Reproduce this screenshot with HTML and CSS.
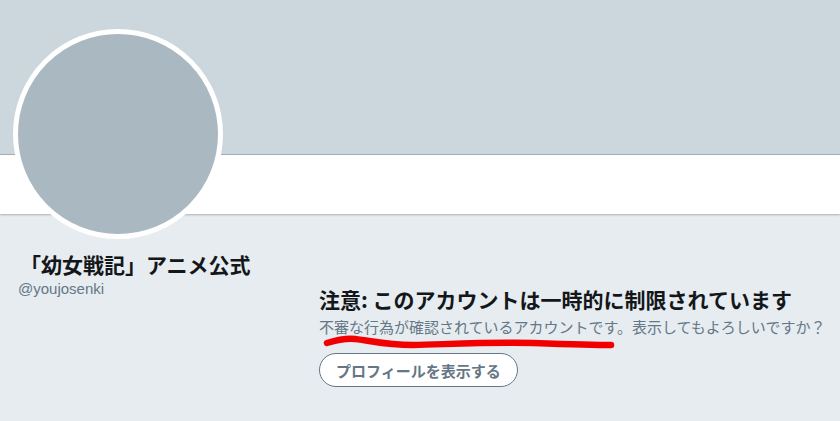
FILE: index.html
```html
<!DOCTYPE html>
<html lang="ja">
<head>
    <meta charset="UTF-8">
    <meta name="viewport" content="width=device-width, initial-scale=1.0">
    <title>「幼女戦記」アニメ公式 (@youjosenki)</title>
    <link rel="stylesheet" href="styles.css">
</head>
<body>

<div class="banner"></div>
<div class="nav-bar"></div>

<!-- アバター -->
<div class="avatar"></div>

<div class="main">
    <div class="profile-side">
        <h1 class="profile-name">「幼女戦記」アニメ公式</h1>
        <p class="profile-handle">@youjosenki</p>
    </div>

    <div class="notice">
        <h2 class="notice-title">注意: このアカウントは一時的に制限されています</h2>
        <p class="notice-text">不審な行為が確認されているアカウントです。表示してもよろしいですか？</p>
        <button class="show-btn">プロフィールを表示する</button>

        <!-- 赤い手書きの下線 -->
        <svg class="scribble" width="300" height="18" viewBox="0 0 300 18">
            <path d="M4 10 C14 7 22 5 32 6 C50 8 62 12 90 12 C130 11 170 9 210 10 C240 11 270 12 288 12" fill="none" stroke="#f20000" stroke-width="6.5" stroke-linecap="round"/>
        </svg>
    </div>
</div>

</body>
</html>
```

FILE: styles.css
```css
body {
    margin: 0;
    padding: 0;
    background-color: #e6ecf0;
    font-family: "Noto Sans CJK JP", "Liberation Sans", sans-serif;
    color: #14171a;
    position: relative;
    height: 421px;
    overflow: hidden;
}
.banner {
    height: 154px;
    background-color: #ccd6dd;
    border-bottom: 1px solid #a7b0b6;
}
.nav-bar {
    height: 59px;
    background-color: #ffffff;
    box-shadow: 0 1px 2px rgba(0, 0, 0, 0.25);
}
.avatar {
    position: absolute;
    left: 13px;
    top: 29px;
    width: 200px;
    height: 200px;
    border: 5px solid #ffffff;
    border-radius: 50%;
    background-color: #aab8c2;
}
.main {
    display: flex;
    padding-left: 20px;
}
.profile-side {
    width: 299px;
    padding-top: 36px;
}
.profile-name {
    margin: 0;
    font-size: 21px;
    font-weight: bold;
    line-height: 28px;
    letter-spacing: 0;
}
.profile-handle {
    margin: 2px 0 0 -2px;
    font-family: "Liberation Sans", sans-serif;
    font-size: 15px;
    color: #657786;
}
.notice {
    position: relative;
    padding-top: 71px;
}
.notice-title {
    margin: 0;
    font-size: 21px;
    font-weight: bold;
    line-height: 28px;
}
.notice-text {
    margin: 4px 0 0;
    font-size: 15px;
    line-height: 20px;
    color: #657786;
}
.show-btn {
    margin-top: 16px;
    padding: 0 16px;
    height: 34px;
    border: 1px solid #657786;
    border-radius: 17px;
    background-color: #ffffff;
    color: #657786;
    font-family: inherit;
    font-size: 15px;
    font-weight: bold;
}
.scribble {
    position: absolute;
    left: 4px;
    top: 119px;
}
```
